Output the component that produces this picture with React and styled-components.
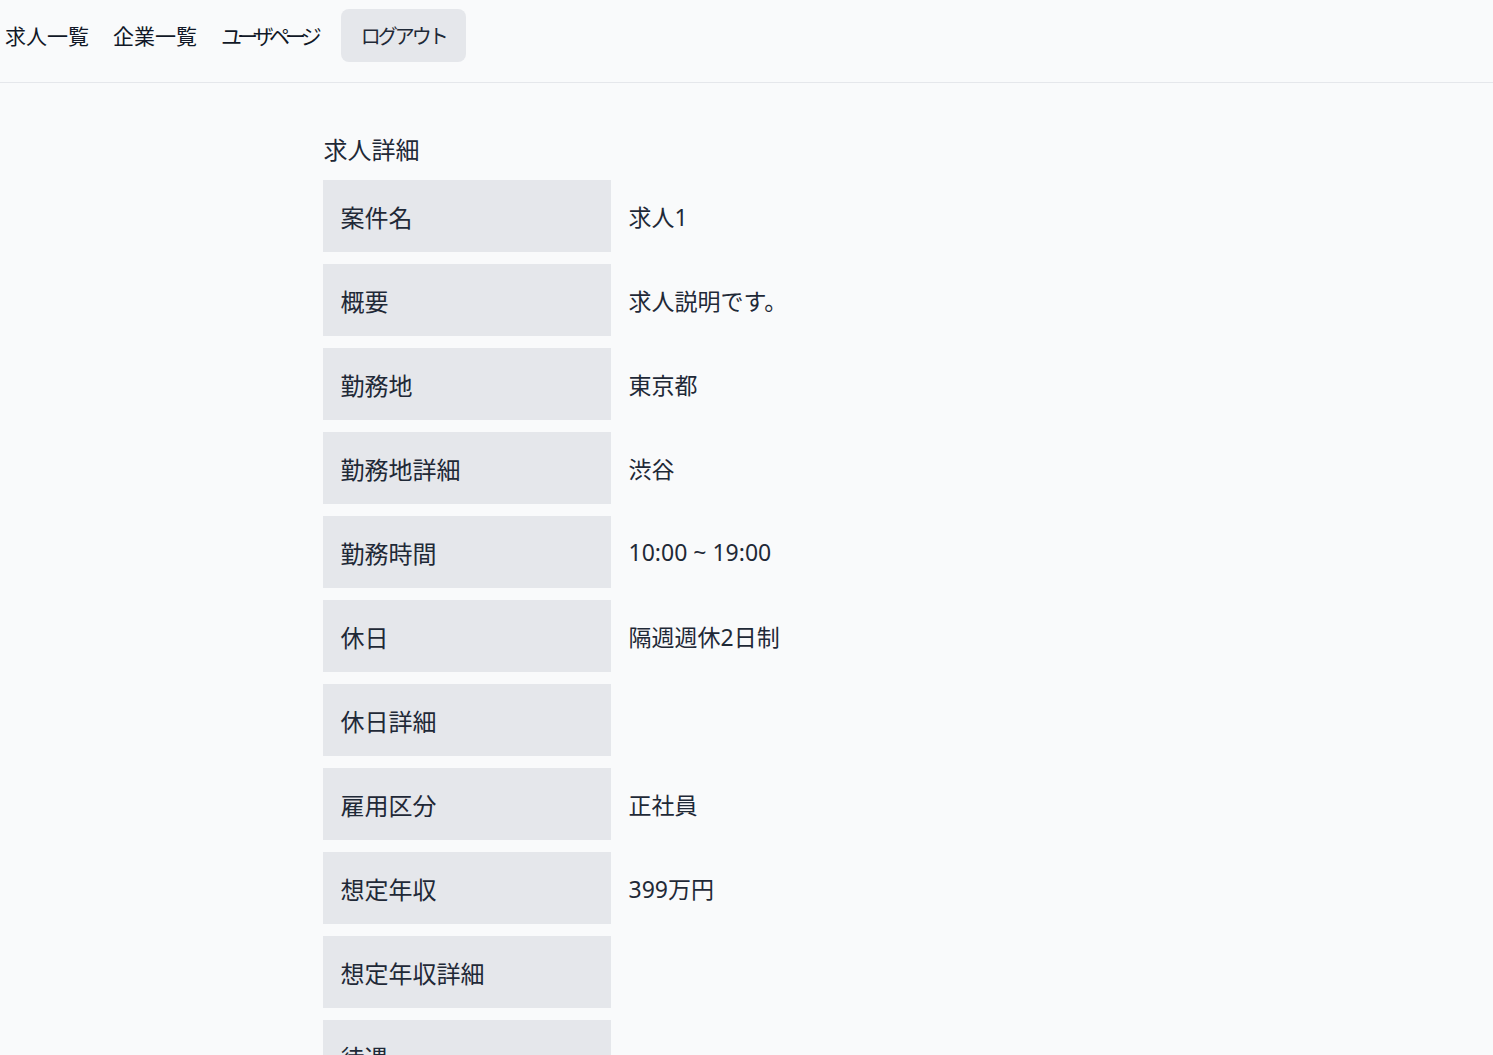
import React from "react";
import styled, { createGlobalStyle } from "styled-components";

const Global = createGlobalStyle`
  html, body { margin: 0; padding: 0; background: #f9fafb; }
  body {
    font-family: "Noto Sans", "Noto Sans CJK JP", sans-serif;
    color: #1f2937;
  }
`;

const Header = styled.header`
  display: flex;
  align-items: flex-start;
  gap: 24px;
  height: 83px;
  padding: 9px 0 0 5px;
  border-bottom: 1px solid #e5e7eb;
  box-sizing: border-box;
`;

const NavLink = styled.a`
  font-size: 21px;
  line-height: 55px;
  color: #111827;
  text-decoration: none;
  cursor: pointer;
  letter-spacing: ${(p) => (p.$kana ? "-4.9px" : "0")};
`;

const LogoutButton = styled.button`
  font-family: inherit;
  font-size: 20px;
  color: #1f2937;
  background: #e5e7eb;
  border: none;
  border-radius: 8px;
  height: 53px;
  width: 125px;
  padding: 0;
  letter-spacing: -3px;
  cursor: pointer;
`;

const Main = styled.main`
  width: 848px;
  margin: 0 auto;
  padding: 48px 0 0 0;
  box-sizing: border-box;
`;

const Title = styled.h1`
  font-size: 24px;
  font-weight: 400;
  margin: 0 0 11px 1px;
  line-height: 38px;
`;

const Table = styled.div`
  display: flex;
  flex-direction: column;
  gap: 12px;
`;

const Row = styled.div`
  display: grid;
  grid-template-columns: 288px 1fr;
  height: 72px;
`;

const Label = styled.div`
  display: flex;
  align-items: center;
  background: #e5e7eb;
  padding-left: 18px;
  font-size: 24px;
`;

const Value = styled.div`
  display: flex;
  align-items: center;
  padding-left: 18px;
  font-size: 23px;
`;

const rows = [
  ["案件名", "求人1"],
  ["概要", "求人説明です。"],
  ["勤務地", "東京都"],
  ["勤務地詳細", "渋谷"],
  ["勤務時間", "10:00 ~ 19:00"],
  ["休日", "隔週週休2日制"],
  ["休日詳細", ""],
  ["雇用区分", "正社員"],
  ["想定年収", "399万円"],
  ["想定年収詳細", ""],
  ["待遇", ""],
  ["応募資格", ""],
];

export default function App() {
  return (
    <>
      <Global />
      <Header>
        <NavLink>求人一覧</NavLink>
        <NavLink>企業一覧</NavLink>
        <NavLink $kana>ユーザページ</NavLink>
        <LogoutButton>ログアウト</LogoutButton>
      </Header>
      <Main>
        <Title>求人詳細</Title>
        <Table>
          {rows.map(([k, v]) => (
            <Row key={k}>
              <Label>{k}</Label>
              <Value>{v}</Value>
            </Row>
          ))}
        </Table>
      </Main>
    </>
  );
}
